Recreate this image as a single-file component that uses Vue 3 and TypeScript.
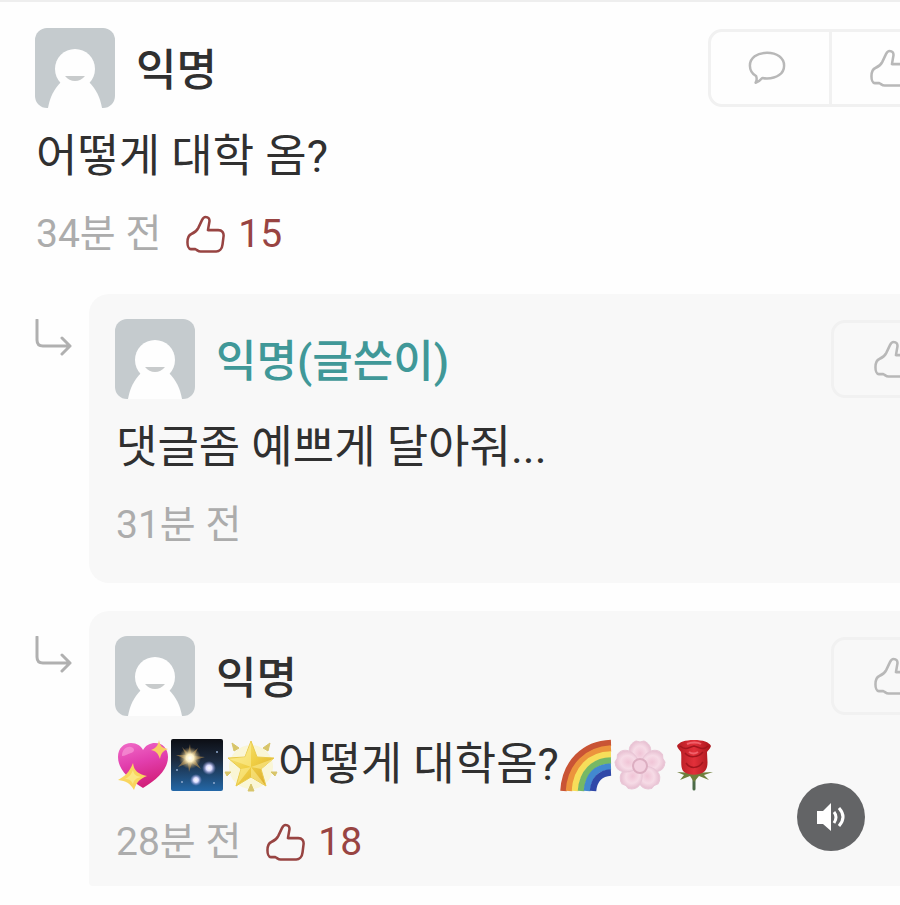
<script setup lang="ts">
type Emoji = 'heart' | 'night' | 'star' | 'rainbow' | 'blossom' | 'rose'

interface Segment {
  text?: string
  emoji?: Emoji
  label?: string
}

interface Comment {
  id: number
  author: string
  isWriter: boolean
  isReply: boolean
  body: Segment[]
  time: string
  likes: number
}

const comments: Comment[] = [
  {
    id: 1,
    author: '익명',
    isWriter: false,
    isReply: false,
    body: [{ text: '어떻게 대학 옴?' }],
    time: '34분 전',
    likes: 15,
  },
  {
    id: 2,
    author: '익명(글쓴이)',
    isWriter: true,
    isReply: true,
    body: [{ text: '댓글좀 예쁘게 달아줘...' }],
    time: '31분 전',
    likes: 0,
  },
  {
    id: 3,
    author: '익명',
    isWriter: false,
    isReply: true,
    body: [
      { emoji: 'heart', label: '💖' },
      { emoji: 'night', label: '🎆' },
      { emoji: 'star', label: '🌟' },
      { text: '어떻게 대학옴?' },
      { emoji: 'rainbow', label: '🌈' },
      { emoji: 'blossom', label: '🌸' },
      { emoji: 'rose', label: '🌹' },
    ],
    time: '28분 전',
    likes: 18,
  },
]
</script>

<template>
  <main class="page">
    <svg class="defs" aria-hidden="true">
      <defs>
        <linearGradient id="g-heart" x1="0" y1="0" x2="0.3" y2="1">
          <stop offset="0" stop-color="#f06cc8" />
          <stop offset="0.5" stop-color="#e23fae" />
          <stop offset="1" stop-color="#d3207c" />
        </linearGradient>
        <linearGradient id="g-night" x1="0" y1="0" x2="0" y2="1">
          <stop offset="0" stop-color="#0c0e14" />
          <stop offset="0.4" stop-color="#1c2a3e" />
          <stop offset="1" stop-color="#2468a8" />
        </linearGradient>
        <radialGradient id="g-burst">
          <stop offset="0" stop-color="#ffffff" />
          <stop offset="0.35" stop-color="#fdf0c4" />
          <stop offset="1" stop-color="#c49a4c" stop-opacity="0" />
        </radialGradient>
        <radialGradient id="g-spark">
          <stop offset="0" stop-color="#ffffff" />
          <stop offset="0.4" stop-color="#dcdcff" />
          <stop offset="1" stop-color="#8a90d8" stop-opacity="0" />
        </radialGradient>
        <linearGradient id="g-star" x1="0" y1="0" x2="1" y2="1">
          <stop offset="0" stop-color="#f7ea90" />
          <stop offset="0.5" stop-color="#f0cf45" />
          <stop offset="1" stop-color="#d8a428" />
        </linearGradient>
        <radialGradient id="g-petal">
          <stop offset="0" stop-color="#f0c4d6" />
          <stop offset="0.6" stop-color="#f6dbe6" />
          <stop offset="1" stop-color="#e9c3d4" />
        </radialGradient>
        <linearGradient id="g-rose" x1="0" y1="0" x2="1" y2="0">
          <stop offset="0" stop-color="#b31c22" />
          <stop offset="0.5" stop-color="#e2303a" />
          <stop offset="1" stop-color="#a8161c" />
        </linearGradient>

        <symbol id="thumb" viewBox="0 0 40 40">
          <path d="M20 2C23 2 24.500 4 24 7L22.500 15.500H33C37 15.500 39 18 38.500 22L37.500 30C37 35 34 37.500 31 37.500H15C12.500 37.500 11.500 36 9.500 35H5C2.500 35 1.500 31 1.500 28C1.500 24 2 21 5.500 19.500C9 18 11 16.500 12.500 13.500L16.500 5C17.500 3 18.500 2 20 2Z" fill="none" stroke="currentColor" stroke-width="2.600" stroke-linejoin="round" />
        </symbol>
        <symbol id="bubble" viewBox="0 0 40 36">
          <path d="M20 2C30.500 2 38 7.500 38 15.500C38 24 30 29 20 29C18 29 16.500 28.800 15 28.500C13 31 11 32.500 8 33.500C9.500 31 9.500 29 8.500 26.500C4.500 24 2 20 2 15.500C2 7.500 9.500 2 20 2Z" fill="none" stroke="currentColor" stroke-width="2.600" stroke-linejoin="round" />
        </symbol>

        <symbol id="heart" viewBox="0 0 54 54">
          <path d="M27 50C12 41 2 31 2 19C2 10 8 5 15 5C21 5 25 8 27 12C30 7 34 5 39 5C47 5 52 11 52 19C52 31 42 41 27 50Z" fill="url(#g-heart)" />
          <path d="M6 18C6 12 10 8 15 9C19 10 19 14 15 15C11 16 9 18 6 18Z" fill="#f795d6" opacity="0.700" />
          <path d="M43 2C44 8 46 10 52 11C47 13 45 15 44 21C42 15 40 13 35 12C40 10 42 8 43 2Z" fill="#f8cd62" />
          <path d="M17 25C18 33 22 36 31 38C24 41 21 43 18 52C14 45 10 43 2 42C9 38 13 35 17 25Z" fill="#f9d65f" />
          <path d="M17 32C18 37 20 38 25 39C20 40 18 42 17 46C15 42 13 41 9 41C13 39 15 37 17 32Z" fill="#fbe785" />
        </symbol>
        <symbol id="night" viewBox="0 0 54 54">
          <rect x="1" y="1" width="52" height="52" rx="2" fill="url(#g-night)" />
          <path d="M20 6L21 16L28 10L24 18L35 19L25 22L31 31L22 25L19 34L18 25L8 29L15 21L6 17L16 17L12 9L18 15Z" fill="#b58e4e" opacity="0.600" />
          <circle cx="20" cy="20" r="11" fill="url(#g-burst)" />
          <circle cx="39" cy="30" r="7" fill="url(#g-spark)" />
          <circle cx="26" cy="42" r="6" fill="url(#g-spark)" />
          <g fill="#8fa9cc">
            <circle cx="7" cy="32" r="1" /><circle cx="47" cy="14" r="1" />
            <circle cx="12" cy="44" r="1" /><circle cx="44" cy="45" r="1" />
          </g>
        </symbol>
        <symbol id="star" viewBox="0 0 54 54">
          <circle cx="27" cy="29" r="22" fill="#fcf3b4" opacity="0.500" />
          <path d="M27 3L33 19L50 20L37 31L42 48L27 39L12 48L17 31L4 20L21 19Z" fill="url(#g-star)" stroke="#e9cb4d" stroke-width="1" stroke-linejoin="round" />
          <path d="M27 4V29L21 19ZM49 21L27 29L37 31ZM41 47L27 29L27 39ZM13 47L27 29L17 31ZM5 21L27 29L21 19Z" fill="#fff3a0" opacity="0.500" />
          <path d="M8 5L15 10L10 13ZM46 5L44 13L39 10ZM1 34L7 34L3 38ZM53 34L47 34L51 38ZM27 46L30 53H24Z" fill="#d8c56a" stroke="#d8c56a" stroke-linejoin="round" />
        </symbol>
        <symbol id="rainbow" viewBox="0 0 54 54">
          <g fill="none" stroke-width="6.500">
            <path d="M4.500 53C6 25 25 6 52 5" stroke="#c95435" />
            <path d="M10 53C11.500 28 28 12 52 10.500" stroke="#ec943c" />
            <path d="M16 53C17 31 31 17 52 16.500" stroke="#f7de5a" />
            <path d="M22 53C23 35 34 23 52 22.500" stroke="#76b865" />
            <path d="M28 53C29 38 37 29 52 28.500" stroke="#4288d0" />
            <path d="M34 53C35 42 41 35 52 34.500" stroke="#3048a8" />
          </g>
        </symbol>
        <symbol id="blossom" viewBox="0 0 54 54">
          <g fill="url(#g-petal)" stroke="#e9c6d6" stroke-width="1">
            <path id="petal" d="M27 28C14 20 13 7 23 3L27 4L31 3C41 7 40 20 27 28Z" />
            <use href="#petal" transform="rotate(72 27 28)" />
            <use href="#petal" transform="rotate(144 27 28)" />
            <use href="#petal" transform="rotate(216 27 28)" />
            <use href="#petal" transform="rotate(288 27 28)" />
          </g>
          <circle cx="27" cy="28" r="7" fill="#f3d0df" stroke="#dcaec1" stroke-width="2" />
        </symbol>
        <symbol id="rose" viewBox="0 0 54 54">
          <path d="M27 33V51" stroke="#4c6b48" stroke-width="3" stroke-linecap="round" />
          <path d="M27 35L10 34L17 37L13 42L23 38L27 44L32 38L42 42L37 37L46 34Z" fill="#6f7f3c" />
          <path d="M10 8C12 4 18 2 27 2C36 2 42 4 44 8C43 11 41 12 40 14C40 21 42 28 38 33C33 38 21 38 16 33C13 28 15 21 14 14C13 12 11 11 10 8Z" fill="url(#g-rose)" />
          <path d="M13 8C19 13 22 9 27 8C32 9 36 13 41 8M18 15C22 20 31 20 36 14M19 25C23 31 31 31 36 24" fill="none" stroke="#a3161e" stroke-width="1.500" />
          <path d="M20 6C24 4 31 4 34 6M22 14C25 16 28 16 31 14" fill="none" stroke="#f0606a" stroke-width="2" />
        </symbol>
      </defs>
    </svg>

    <div class="thread">
      <article
        v-for="comment in comments"
        :key="comment.id"
        class="comment"
        :class="{ reply: comment.isReply }"
      >
        <svg v-if="comment.isReply" class="branch" viewBox="0 0 38 38" aria-hidden="true">
          <path d="M2 1V21Q2 27 8 27H35M27 19L35 27L27 35" />
        </svg>

        <div class="content">
          <header class="head">
            <svg class="avatar" viewBox="0 0 80 80" aria-hidden="true">
              <rect width="80" height="80" rx="12" fill="#c5cbce" />
              <path d="M13 80C15 69 19 61 26 54H54C61 61 65 69 67 80Z" fill="#fefefe" />
              <circle cx="40" cy="41" r="20" fill="#fefefe" />
              <path d="M30 48H50Q46 53 40 53Q34 53 30 48Z" fill="#c8cbcc" />
            </svg>
            <h2 class="author" :class="{ writer: comment.isWriter }">{{ comment.author }}</h2>
            <div class="actions">
              <button v-if="!comment.isReply" type="button" class="action" aria-label="답글">
                <svg class="bubble"><use href="#bubble" /></svg>
              </button>
              <button type="button" class="action" aria-label="공감">
                <svg class="thumb"><use href="#thumb" /></svg>
              </button>
            </div>
          </header>

          <p class="body">
            <template v-for="(segment, i) in comment.body" :key="i">
              <svg v-if="segment.emoji" class="emoji" role="img" :aria-label="segment.label">
                <use :href="'#' + segment.emoji" />
              </svg>
              <span v-else>{{ segment.text }}</span>
            </template>
          </p>

          <footer class="meta">
            <span class="time">{{ comment.time }}</span>
            <span v-if="comment.likes" class="likes">
              <svg class="thumb" aria-hidden="true"><use href="#thumb" /></svg>
              {{ comment.likes }}
            </span>
          </footer>
        </div>
      </article>
    </div>

    <button type="button" class="sound" aria-label="소리">
      <svg viewBox="0 0 30 30" aria-hidden="true">
        <path d="M1 9H7L15 1V29L7 22H1Z" fill="#ffffff" />
        <path d="M18 10Q22 15 18 21M23 6Q31 15 23 24" fill="none" stroke="#ffffff" stroke-width="3" />
      </svg>
    </button>
  </main>
</template>

<style>
body {
  margin: 0;
  background: #fefefe;
}
</style>

<style scoped>
.page {
  position: relative;
  overflow: hidden;
  box-sizing: border-box;
  min-height: 100vh;
  padding: 26px 0 19px 35px;
  border-top: 2px solid #eeeeee;
  background: #fefefe;
  color: #303030;
  font-family: Roboto, "Noto Sans CJK KR", sans-serif;
}

.defs {
  position: absolute;
  width: 0;
  height: 0;
}

/* The thread is wider than the viewport, so its right side runs off screen. */
.thread {
  display: flex;
  flex-direction: column;
  gap: 28px;
  margin-right: -80px;
}

.comment {
  display: flex;
}

.comment:first-child {
  padding-bottom: 12px;
}

.content {
  flex: 1;
  padding-right: 30px;
}

.branch {
  flex: none;
  width: 38px;
  height: 38px;
  margin: 25px 16px 0 0;
  fill: none;
  stroke: #b0b0b0;
  stroke-width: 3;
  stroke-linecap: round;
  stroke-linejoin: round;
}

.reply .content {
  padding: 25px 25px 38px 26px;
  border-radius: 20px;
  background: #f8f8f8;
}

.reply:last-child .content {
  padding-bottom: 24px;
  border-radius: 20px 0 0 4px;
}

.head {
  display: flex;
  align-items: center;
  height: 80px;
}

.avatar {
  width: 80px;
  height: 80px;
  margin-right: 21px;
}

.author {
  margin: 0;
  padding-top: 6px;
  font-size: 44px;
  font-weight: 500;
  line-height: 64px;
}

.writer {
  color: #409898;
}

.actions {
  display: flex;
  margin-left: auto;
  border: 3px solid #f1f1f1;
  border-radius: 14px;
}

.action {
  display: flex;
  align-items: center;
  justify-content: center;
  width: 118px;
  height: 72px;
  padding: 0;
  border: 0;
  background: none;
  color: #b8b8b8;
}

.action + .action {
  border-left: 3px solid #f1f1f1;
}

.action .bubble {
  margin-right: 6px;
}

.thumb {
  width: 39px;
  height: 39px;
}

.bubble {
  width: 38px;
  height: 36px;
}

.body {
  display: flex;
  align-items: center;
  height: 64px;
  margin: 17px 0 26px;
  padding-left: 1px;
  font-size: 45px;
  line-height: 64px;
  white-space: nowrap;
}

.emoji {
  width: 54px;
  height: 54px;
}

.meta {
  display: flex;
  align-items: center;
  gap: 25px;
  height: 39px;
  padding-left: 1px;
  font-size: 39px;
  line-height: 39px;
}

.time {
  color: #acacac;
}

.likes {
  display: flex;
  align-items: center;
  gap: 13px;
  color: #984442;
}

.sound {
  position: absolute;
  right: 35px;
  bottom: 54px;
  display: flex;
  align-items: center;
  justify-content: center;
  width: 68px;
  height: 68px;
  padding: 0;
  border: 0;
  border-radius: 50%;
  background: #636466;
}

.sound svg {
  width: 30px;
  height: 30px;
}
</style>
